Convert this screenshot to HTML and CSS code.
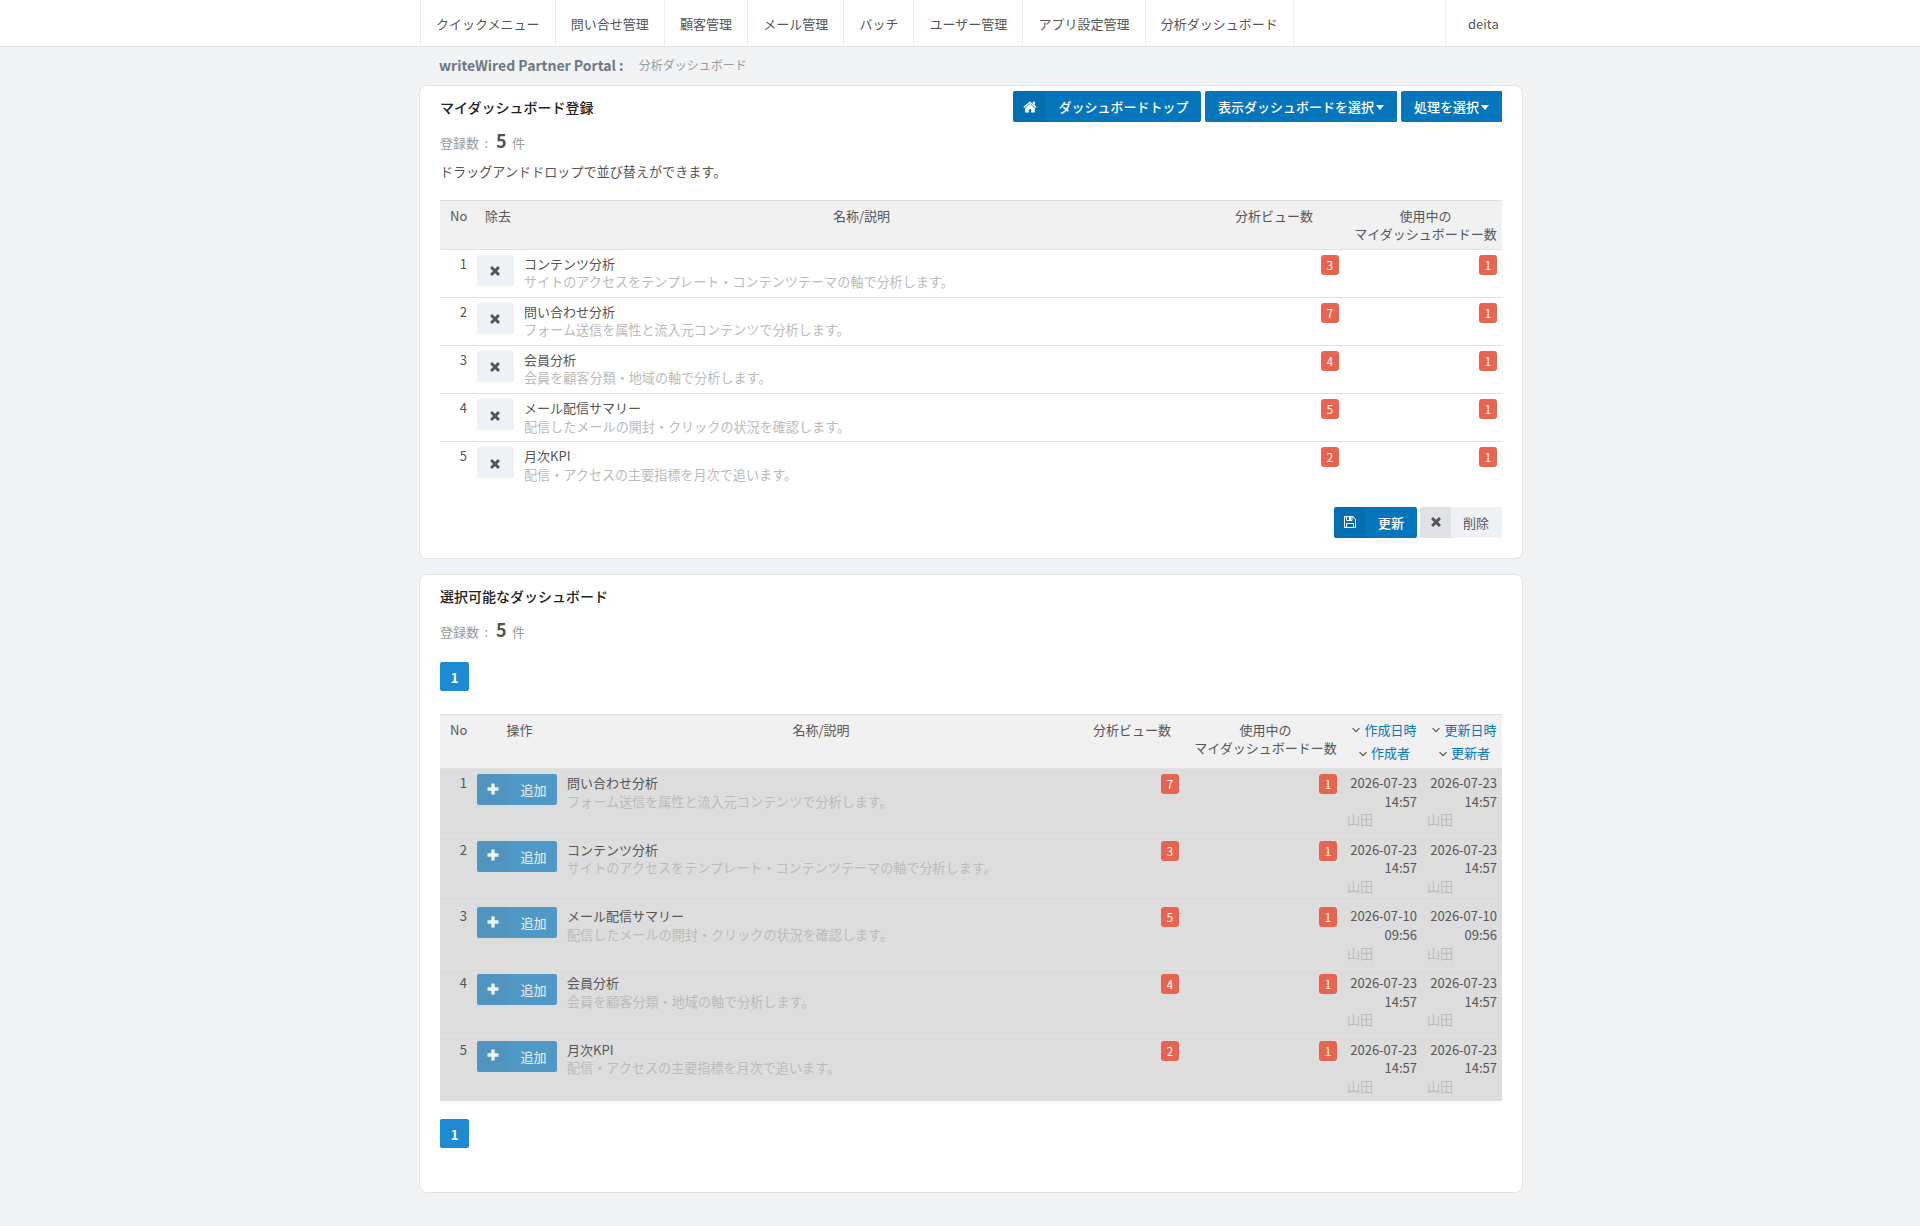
FILE: index.html
```html
<!DOCTYPE html>
<html lang="ja">
<head>
<meta charset="utf-8">
<title>分析ダッシュボード</title>
<link rel="stylesheet" href="styles.css">
</head>
<body>
<svg class="sprite" aria-hidden="true">
  <symbol id="i-x" viewBox="0 0 12 12"><path d="M2.6 2.6 9.4 9.4M9.4 2.6 2.6 9.4" stroke="currentColor" stroke-width="3.4" stroke-linecap="square" fill="none" transform="translate(.9 .9) scale(.85)"/></symbol>
  <symbol id="i-plus" viewBox="0 0 12 12"><path d="M4.3.5h3.4v3.8h3.8v3.4H7.7v3.8H4.3V7.7H.5V4.3h3.8z" fill="currentColor"/></symbol>
  <symbol id="i-home" viewBox="0 0 14 12"><path d="M7 .4 13.700 6.100l-.9 1L7 2.300 1.200 7.100l-.9-1zM9.800.8h2.200v3.200L9.800 2.200zM7 3.100l4.800 4V11q0 .6-.6.6H8.200V8.200H5.800v3.400H2.800q-.6 0-.6-.6V7.100z" fill="currentColor"/></symbol>
  <symbol id="i-save" viewBox="0 0 12 12"><path d="M.5.5h8.300L11.500 3.200v8.300H.5zM2.500.5v4h5.500v-4M2.500 11.500v-4h7v4" fill="none" stroke="currentColor"/><path d="M5 1h2v3H5z" fill="currentColor"/></symbol>
  <symbol id="i-down" viewBox="0 0 8 6"><path d="m.6 1.200 3.400 3.400 3.400-3.400" fill="none" stroke="currentColor" stroke-width="1.200"/></symbol>
</svg>

<header class="nav">
  <div class="nav-inner">
    <ul class="menu">
      <li>クイックメニュー</li><li>問い合せ管理</li><li>顧客管理</li><li>メール管理</li><li>バッチ</li><li>ユーザー管理</li><li>アプリ設定管理</li><li>分析ダッシュボード</li>
    </ul>
    <div class="user">deita</div>
  </div>
</header>

<main class="page">
  <div class="crumbs"><h1>writeWired Partner Portal :</h1><span>分析ダッシュボード</span></div>

  <section class="panel panel-mine">
    <div class="panel-head">
      <h2>マイダッシュボード登録</h2>
      <div class="actions">
        <a class="btn primary home"><span class="ico"><svg width="14" height="12"><use href="#i-home"/></svg></span><span class="lbl">ダッシュボードトップ</span></a>
        <a class="btn primary drop">表示ダッシュボードを選択<i class="caret"></i></a>
        <a class="btn primary drop">処理を選択<i class="caret"></i></a>
      </div>
    </div>
    <p class="count"><span>登録数</span><span class="colon">:</span><b>5</b><span>件</span></p>
    <p class="note">ドラッグアンドドロップで並び替えができます。</p>
    <table class="grid">
      <colgroup><col class="c-no"><col class="c-del"><col><col class="c-views"><col class="c-used"></colgroup>
      <thead><tr><th>No</th><th>除去</th><th>名称/説明</th><th>分析ビュー数</th><th>使用中の<br>マイダッシュボードー数</th></tr></thead>
      <tbody>
        <tr><td class="r">1</td><td><a class="btn del"><svg width="12" height="12"><use href="#i-x"/></svg></a></td><td>コンテンツ分析<div class="desc">サイトのアクセスをテンプレート・コンテンツテーマの軸で分析します。</div></td><td><span class="badge">3</span></td><td><span class="badge">1</span></td></tr>
        <tr><td class="r">2</td><td><a class="btn del"><svg width="12" height="12"><use href="#i-x"/></svg></a></td><td>問い合わせ分析<div class="desc">フォーム送信を属性と流入元コンテンツで分析します。</div></td><td><span class="badge">7</span></td><td><span class="badge">1</span></td></tr>
        <tr><td class="r">3</td><td><a class="btn del"><svg width="12" height="12"><use href="#i-x"/></svg></a></td><td>会員分析<div class="desc">会員を顧客分類・地域の軸で分析します。</div></td><td><span class="badge">4</span></td><td><span class="badge">1</span></td></tr>
        <tr><td class="r">4</td><td><a class="btn del"><svg width="12" height="12"><use href="#i-x"/></svg></a></td><td>メール配信サマリー<div class="desc">配信したメールの開封・クリックの状況を確認します。</div></td><td><span class="badge">5</span></td><td><span class="badge">1</span></td></tr>
        <tr><td class="r">5</td><td><a class="btn del"><svg width="12" height="12"><use href="#i-x"/></svg></a></td><td>月次KPI<div class="desc">配信・アクセスの主要指標を月次で追います。</div></td><td><span class="badge">2</span></td><td><span class="badge">1</span></td></tr>
      </tbody>
    </table>
    <div class="foot">
      <a class="btn primary save"><span class="ico"><svg width="12" height="12"><use href="#i-save"/></svg></span><span class="lbl">更新</span></a>
      <a class="btn light remove"><span class="ico"><svg width="12" height="12"><use href="#i-x"/></svg></span><span class="lbl">削除</span></a>
    </div>
  </section>

  <section class="panel panel-all">
    <div class="panel-head"><h2>選択可能なダッシュボード</h2></div>
    <p class="count"><span>登録数</span><span class="colon">:</span><b>5</b><span>件</span></p>
    <div class="pager"><span>1</span></div>
    <table class="grid picked">
      <colgroup><col class="c-no"><col class="c-add"><col><col class="c-views2"><col class="c-used"><col class="c-date"><col class="c-date"></colgroup>
      <thead><tr><th>No</th><th>操作</th><th>名称/説明</th><th>分析ビュー数</th><th>使用中の<br>マイダッシュボードー数</th>
        <th><div class="sort"><svg width="8" height="6"><use href="#i-down"/></svg><a>作成日時</a></div><div class="sort"><svg width="8" height="6"><use href="#i-down"/></svg><a>作成者</a></div></th>
        <th><div class="sort"><svg width="8" height="6"><use href="#i-down"/></svg><a>更新日時</a></div><div class="sort"><svg width="8" height="6"><use href="#i-down"/></svg><a>更新者</a></div></th></tr></thead>
      <tbody>
        <tr><td class="r">1</td><td><a class="btn primary add"><span class="ico"><svg width="12" height="12"><use href="#i-plus"/></svg></span><span class="lbl">追加</span></a></td><td>問い合わせ分析<div class="desc">フォーム送信を属性と流入元コンテンツで分析します。</div></td><td><span class="badge">7</span></td><td><span class="badge">1</span></td><td class="r">2026-07-23 14:57<div class="desc who">山田</div></td><td class="r">2026-07-23 14:57<div class="desc who">山田</div></td></tr>
        <tr><td class="r">2</td><td><a class="btn primary add"><span class="ico"><svg width="12" height="12"><use href="#i-plus"/></svg></span><span class="lbl">追加</span></a></td><td>コンテンツ分析<div class="desc">サイトのアクセスをテンプレート・コンテンツテーマの軸で分析します。</div></td><td><span class="badge">3</span></td><td><span class="badge">1</span></td><td class="r">2026-07-23 14:57<div class="desc who">山田</div></td><td class="r">2026-07-23 14:57<div class="desc who">山田</div></td></tr>
        <tr><td class="r">3</td><td><a class="btn primary add"><span class="ico"><svg width="12" height="12"><use href="#i-plus"/></svg></span><span class="lbl">追加</span></a></td><td>メール配信サマリー<div class="desc">配信したメールの開封・クリックの状況を確認します。</div></td><td><span class="badge">5</span></td><td><span class="badge">1</span></td><td class="r">2026-07-10 09:56<div class="desc who">山田</div></td><td class="r">2026-07-10 09:56<div class="desc who">山田</div></td></tr>
        <tr><td class="r">4</td><td><a class="btn primary add"><span class="ico"><svg width="12" height="12"><use href="#i-plus"/></svg></span><span class="lbl">追加</span></a></td><td>会員分析<div class="desc">会員を顧客分類・地域の軸で分析します。</div></td><td><span class="badge">4</span></td><td><span class="badge">1</span></td><td class="r">2026-07-23 14:57<div class="desc who">山田</div></td><td class="r">2026-07-23 14:57<div class="desc who">山田</div></td></tr>
        <tr><td class="r">5</td><td><a class="btn primary add"><span class="ico"><svg width="12" height="12"><use href="#i-plus"/></svg></span><span class="lbl">追加</span></a></td><td>月次KPI<div class="desc">配信・アクセスの主要指標を月次で追います。</div></td><td><span class="badge">2</span></td><td><span class="badge">1</span></td><td class="r">2026-07-23 14:57<div class="desc who">山田</div></td><td class="r">2026-07-23 14:57<div class="desc who">山田</div></td></tr>
      </tbody>
    </table>
    <div class="pager"><span>1</span></div>
  </section>
</main>
</body>
</html>
```
FILE: styles.css
```css
* { box-sizing: border-box; }
body {
  margin: 0;
  min-height: 1226px;
  background: #f1f3f5;
  color: #555;
  font: 13px/18.57px "Noto Sans CJK JP", sans-serif;
}
h1, h2, p, ul { margin: 0; padding: 0; }
.sprite { display: none; }
svg { display: block; }

.nav { height: 47px; background: #fff; border-bottom: 1px solid #e2e3e4; }
.nav-inner { width: 1103px; height: 46px; margin-left: 420px; display: flex; justify-content: space-between; line-height: 47px; }
.menu { display: flex; list-style: none; border-left: 1px solid #eee; }
.menu li { padding: 0 15.1px; border-right: 1px solid #eee; overflow: hidden; }
.user { width: 78px; padding-left: 22px; border-left: 1px solid #eee; overflow: hidden; }

.page { width: 1104px; margin-left: 419px; }
.crumbs { height: 38px; padding: 0 0 2px 20px; display: flex; align-items: center; gap: 15px; }
.crumbs h1 { font-size: 14px; font-weight: 700; color: #6c7883; }
.crumbs span { font-size: 12px; color: #999; }

.panel { background: #fff; border: 1px solid #e2e4e6; border-radius: 8px; padding: 0 20px; }
.panel-mine { height: 474px; margin-bottom: 15px; }
.panel-all { height: 619px; }
.panel-head { height: 36px; padding-top: 5px; display: flex; justify-content: space-between; }
.panel-head h2 { font-size: 14px; font-weight: 500; color: #222; line-height: 32px; }
.actions { display: flex; gap: 4px; }

.btn { display: flex; height: 31px; line-height: 32px; border-radius: 2px; white-space: nowrap; }
.primary { background: #0576bc; color: #fff; font-weight: 500; }
.light { background: #eef1f6; color: #555; }
.ico { display: flex; align-items: center; justify-content: center; background: rgba(0, 0, 0, .06); }
.home { width: 188px; }
.home .ico { width: 33px; }
.home .lbl { padding-left: 12.5px; }
.drop { padding-left: 13px; align-items: center; border-radius: 2px 0 0 2px; width: 192px; }
.drop:last-child { width: 101px; }
.caret { margin: 1px 0 0 2px; border: 4px solid transparent; border-top: 5px solid currentColor; border-bottom: 0; }

.count { display: flex; align-items: baseline; height: 32px; line-height: 32px; margin-top: 2px; color: #999; }
.colon { margin-left: 5.5px; width: 11.5px; }
.count b { font-size: 18px; color: #555; width: 16px; }
.note { margin-top: 6px; font-size: 13.1px; line-height: 20px; }

.grid { width: 1062px; border-collapse: separate; border-spacing: 0; table-layout: fixed; margin-top: 18px; }
.c-no { width: 32px; }
.c-del { width: 47px; }
.c-add { width: 90px; }
.c-views { width: 145px; }
.c-views2 { width: 109px; }
.c-used { width: 158px; }
.c-date { width: 80px; }
.grid th { padding: 5.5px 5px 5px 10px; font-weight: 400; vertical-align: top; background: #f1f1f1; border-top: 1px solid #e2e2e2; white-space: nowrap; }
.grid td { padding: 5px; vertical-align: top; border-top: 1px solid #e2e2e2; }
.grid .r { text-align: right; }
.desc { color: #bbb; font-size: 13.1px; }
.who { text-align: left; }
.badge { display: block; margin-left: auto; width: 18px; height: 20px; border-radius: 3px; background: #e76453; color: #fff; font-size: 11.5px; line-height: 21px; text-align: center; }
.del { width: 37px; align-items: center; justify-content: center; background: #eef1f6; padding: 2px 1px 0 0; }

.foot { display: flex; justify-content: flex-end; gap: 3px; margin-top: 17.4px; }
.save { width: 83px; }
.save .ico { width: 32px; }
.remove { width: 82px; }
.remove .ico { width: 31px; }
.foot .lbl { padding-left: 12px; }

.pager { display: flex; margin-top: 17px; }
.pager span { width: 29px; height: 29px; line-height: 31px; border-radius: 2px; background: #1e8ad1; color: #fff; font-weight: 700; text-align: center; }

.picked { margin-top: 23px; }
.picked + .pager { margin-top: 18px; }
.picked tbody { background: #ddd; }
.add { width: 80px; opacity: .65; font-weight: 400; }
.add .ico { width: 31px; padding-bottom: 2px; }
.add .lbl { padding-left: 12.5px; }
.sort { display: flex; align-items: center; justify-content: center; gap: 4px; }
.sort + .sort { margin-top: 5.4px; }
.sort a { color: #0576bc; }
```
